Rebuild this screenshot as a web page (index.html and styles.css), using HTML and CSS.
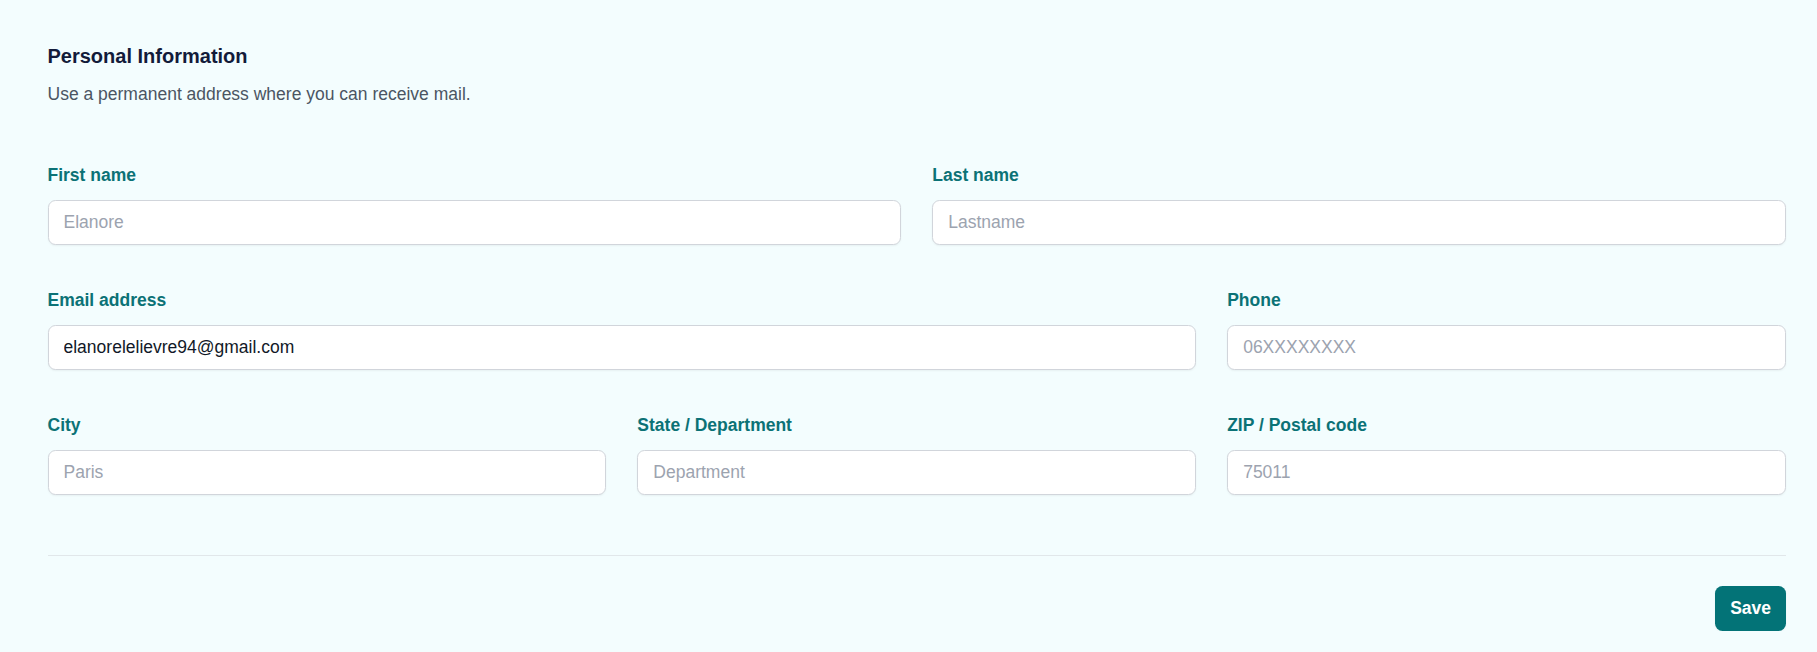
FILE: index.html
```html
<!DOCTYPE html>
<html lang="en">
<head>
<meta charset="utf-8">
<title>Personal Information</title>
<link rel="stylesheet" href="styles.css">
</head>
<body>
<main class="page">
  <form class="form">
    <section class="section">
      <h2 class="title">Personal Information</h2>
      <p class="subtitle">Use a permanent address where you can receive mail.</p>
      <div class="grid">
        <div class="field span-3">
          <label class="label" for="first">First name</label>
          <input class="input" id="first" type="text" placeholder="Elanore">
        </div>
        <div class="field span-3">
          <label class="label" for="last">Last name</label>
          <input class="input" id="last" type="text" placeholder="Lastname">
        </div>
        <div class="field span-4">
          <label class="label" for="email">Email address</label>
          <input class="input" id="email" type="email" value="elanorelelievre94@gmail.com">
        </div>
        <div class="field span-2">
          <label class="label" for="phone">Phone</label>
          <input class="input" id="phone" type="text" placeholder="06XXXXXXXX">
        </div>
        <div class="field span-2">
          <label class="label" for="city">City</label>
          <input class="input" id="city" type="text" placeholder="Paris">
        </div>
        <div class="field span-2">
          <label class="label" for="state">State / Department</label>
          <input class="input" id="state" type="text" placeholder="Department">
        </div>
        <div class="field span-2">
          <label class="label" for="zip">ZIP / Postal code</label>
          <input class="input" id="zip" type="text" placeholder="75011">
        </div>
      </div>
    </section>
    <div class="actions">
      <button class="save" type="button">Save</button>
    </div>
  </form>
</main>
</body>
</html>
```

FILE: styles.css
```css
* { box-sizing: border-box; }

html, body {
  margin: 0;
  padding: 0;
  background: #f3fdfe;
  font-family: "Liberation Sans", Arial, sans-serif;
}

.page {
  padding: 39px 31px 0 47.5px;
}

.section {
  border-bottom: 1px solid #e1e7ea;
  padding-bottom: 60px;
}

.title {
  margin: 0;
  font-size: 20px;
  line-height: 35px;
  font-weight: 700;
  color: #121b3a;
}

.subtitle {
  margin: 5px 0 0;
  font-size: 17.5px;
  line-height: 30px;
  color: #4b5563;
}

.grid {
  margin-top: 51px;
  display: grid;
  grid-template-columns: repeat(6, minmax(0, 1fr));
  column-gap: 31px;
  row-gap: 40px;
}

.span-2 { grid-column: span 2; }
.span-3 { grid-column: span 3; }
.span-4 { grid-column: span 4; }

.field {
  display: flex;
  flex-direction: column;
}

.label {
  font-size: 17.5px;
  line-height: 30px;
  font-weight: 700;
  color: #0b7276;
}

.input {
  margin-top: 10px;
  width: 100%;
  height: 45px;
  padding: 7.5px 15px;
  font-family: "Liberation Sans", Arial, sans-serif;
  font-size: 17.5px;
  line-height: 30px;
  color: #111827;
  background: #ffffff;
  border: 1px solid #d1d5db;
  border-radius: 7.5px;
  box-shadow: 0 1px 2px rgba(0, 0, 0, 0.05);
  outline: none;
}

.input::placeholder {
  color: #9ca3af;
}

.actions {
  display: flex;
  justify-content: flex-end;
  margin-top: 30px;
}

.save {
  height: 45px;
  padding: 0 15px;
  border: 0;
  border-radius: 7.5px;
  background: #037377;
  color: #ffffff;
  font-family: "Liberation Sans", Arial, sans-serif;
  font-size: 17.5px;
  line-height: 25px;
  font-weight: 700;
  box-shadow: 0 1px 2px rgba(0, 0, 0, 0.05);
  cursor: pointer;
}
```
